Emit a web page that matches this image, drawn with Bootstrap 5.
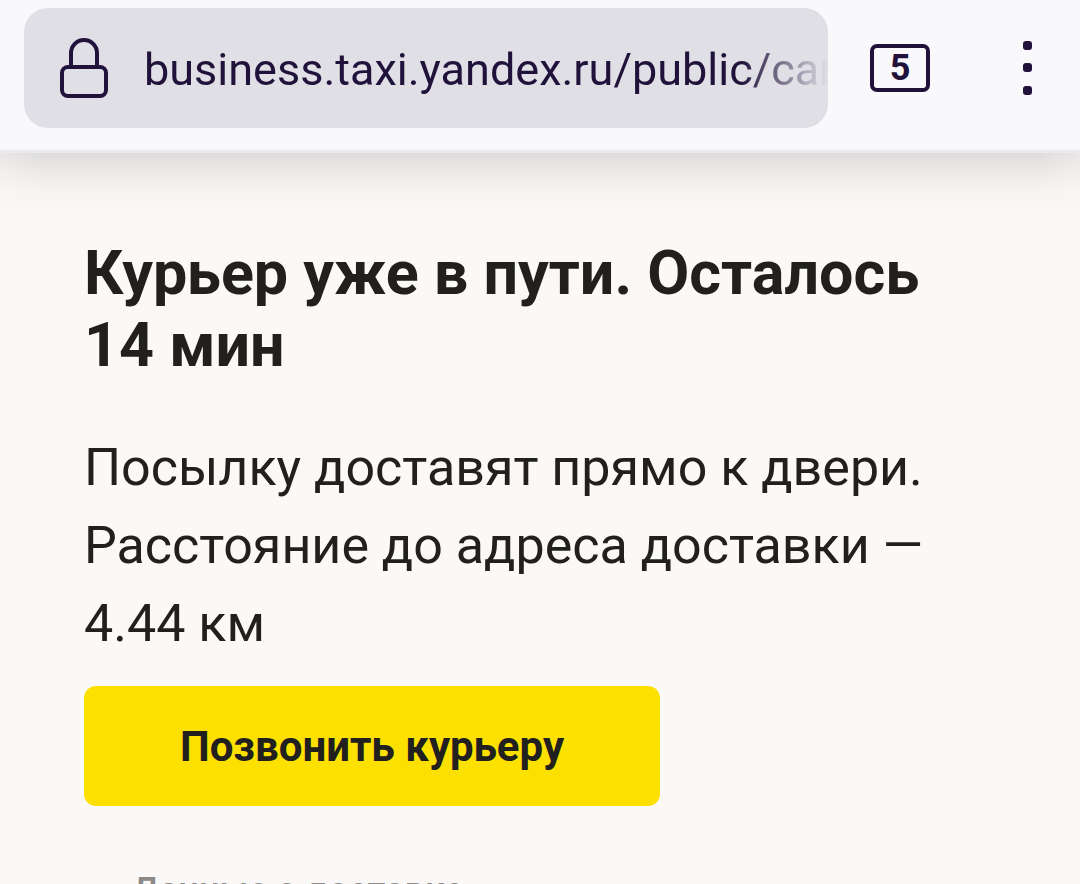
<!DOCTYPE html>
<html lang="ru">
<head>
<meta charset="utf-8">
<meta name="viewport" content="width=device-width, initial-scale=1">
<title>Курьер уже в пути</title>
<link href="https://cdn.jsdelivr.net/npm/bootstrap@5.3.0/dist/css/bootstrap.min.css" rel="stylesheet">
<style>
  body { font-family: Roboto, "Noto Sans", sans-serif; background: #faf9f7; color: #21201f; }
  .browser-bar { background: #f9f9fb; padding: 8px 24px 22px; border-bottom: 3px solid #ebeaec; gap: 28px; color: #20123a; }
  .address { background: #e0dfe6; border-radius: 24px; height: 120px; padding-left: 36px; gap: 36px; min-width: 0; }
  .address input { font-size: 45px; color: #20123a; border: 0; background: none; padding: 4px 0 0; outline: 0; min-width: 0;
    -webkit-mask-image: linear-gradient(to right, #000 calc(100% - 88px), transparent); mask-image: linear-gradient(to right, #000 calc(100% - 88px), transparent); }
  .bar-btn { border: 0; background: none; padding: 0; color: inherit; height: 120px; }
  .tabs-btn { width: 88px; }
  .tab-count { width: 60px; height: 48px; border: 4px solid; border-radius: 7px; font-size: 36px; font-weight: 700; line-height: 41px; }
  .menu-btn { width: 112px; padding-left: 54px; }
  .page-shade { height: 68px; background:
    linear-gradient(to right, #faf9f766, transparent 40px, transparent calc(100% - 40px), #faf9f766),
    linear-gradient(#dddcdb, #eceae9 28%, #f5f4f2 55%, #faf9f7); }
  .order { padding: 16px 84px 0; }
  .order h1 { font-size: 61px; line-height: 72px; font-weight: 700; margin: 0 0 48px; }
  .order-text { font-size: 52px; line-height: 78px; margin: 0 0 23px; }
  .call-btn { width: 576px; max-width: 100%; height: 120px; border: 0; border-radius: 12px; background: #fce000; color: #21201f; font-size: 42px; font-weight: 700; }
  .order-note { font-size: 36px; line-height: 48px; font-weight: 500; color: #8c8a88; margin: 61px 0 0; padding-left: 48px; }
</style>
</head>
<body class="vh-100 overflow-hidden">
<header class="browser-bar d-flex align-items-center">
  <div class="address d-flex align-items-center flex-grow-1">
    <svg class="flex-shrink-0" width="48" height="60" viewBox="0 0 48 60" fill="none" stroke="currentColor" stroke-width="4" aria-hidden="true">
      <rect x="2" y="29" width="44" height="29" rx="6"/>
      <path d="M11 29V15a13 13 0 0 1 26 0v14"/>
    </svg>
    <input class="flex-grow-1" type="text" aria-label="Адрес" value="business.taxi.yandex.ru/public/cargo">
  </div>
  <div class="d-flex flex-shrink-0">
    <button class="bar-btn tabs-btn d-flex align-items-center justify-content-center" type="button" aria-label="Вкладки"><span class="tab-count">5</span></button>
    <button class="bar-btn menu-btn" type="button" aria-label="Меню">
      <svg width="9" height="54" viewBox="0 0 9 54" fill="currentColor"><rect width="9" height="9" rx="3"/><rect y="22" width="9" height="9" rx="3"/><rect y="45" width="9" height="9" rx="3"/></svg>
    </button>
  </div>
</header>
<div class="page-shade"></div>
<main class="order">
  <h1>Курьер уже в пути. Осталось 14 мин</h1>
  <p class="order-text">Посылку доставят прямо к двери. Расстояние до адреса доставки — 4.44 км</p>
  <button class="call-btn" type="button">Позвонить курьеру</button>
  <p class="order-note">Данные о доставке</p>
</main>
<script src="https://cdn.jsdelivr.net/npm/bootstrap@5.3.0/dist/js/bootstrap.bundle.min.js"></script>
</body>
</html>
